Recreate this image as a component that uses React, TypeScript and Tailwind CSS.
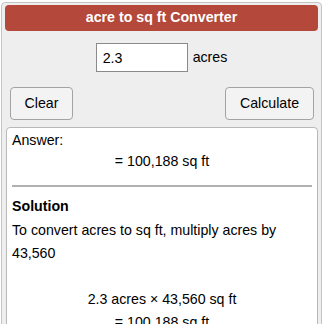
import React from "react";

export default function App() {
  return (
    <div
      className="w-[324px] h-[324px] overflow-hidden bg-white text-black text-[14.2px]"
      style={{ fontFamily: '"Liberation Sans", Arial, sans-serif' }}
    >
      <div className="ml-[1px] mt-[2px] w-[321px] h-[340px] border border-[#c4c4c4] rounded-[4px] bg-[#eeeeee] pt-[2px] px-[3px]">
        <div className="h-[26px] rounded-[4px] bg-[#b4483a] text-white font-bold flex items-center justify-center">
          acre to sq ft Converter
        </div>
        <div className="mt-[12px] flex justify-center items-center gap-[5px]">
          <input
            defaultValue="2.3"
            className="w-[92px] h-[29px] border border-[#8a8a8a] bg-white px-[6px] text-[14.2px] outline-none"
          />
          <span>acres</span>
        </div>
        <div className="mt-[15px] flex justify-between pl-[5px] pr-[4px]">
          <button className="w-[63px] h-[33px] border border-[#a3a3a3] rounded-[4px] bg-[#f3f3f3]">
            Clear
          </button>
          <button className="w-[89px] h-[33px] border border-[#a3a3a3] rounded-[4px] bg-[#f3f3f3]">
            Calculate
          </button>
        </div>
        <div className="mt-[7px] ml-[1px] bg-white border border-[#b8b8b8] rounded-[4px] px-[5px] pt-[2px]">
          <div className="leading-[21px]">Answer:</div>
          <div className="leading-[21px] text-center">= 100,188 sq ft</div>
          <div className="mt-[13px] h-[2px] bg-[#b0b0b0]" />
          <div className="mt-[9px] leading-[21px] font-bold">Solution</div>
          <div className="mt-[2px] leading-[23px]">
            To convert acres to sq ft, multiply acres by
            <br />
            43,560
          </div>
          <div className="mt-[23px] leading-[23px] text-center">
            2.3 acres × 43,560 sq ft
            <br />
            = 100,188 sq ft
          </div>
        </div>
      </div>
    </div>
  );
}
